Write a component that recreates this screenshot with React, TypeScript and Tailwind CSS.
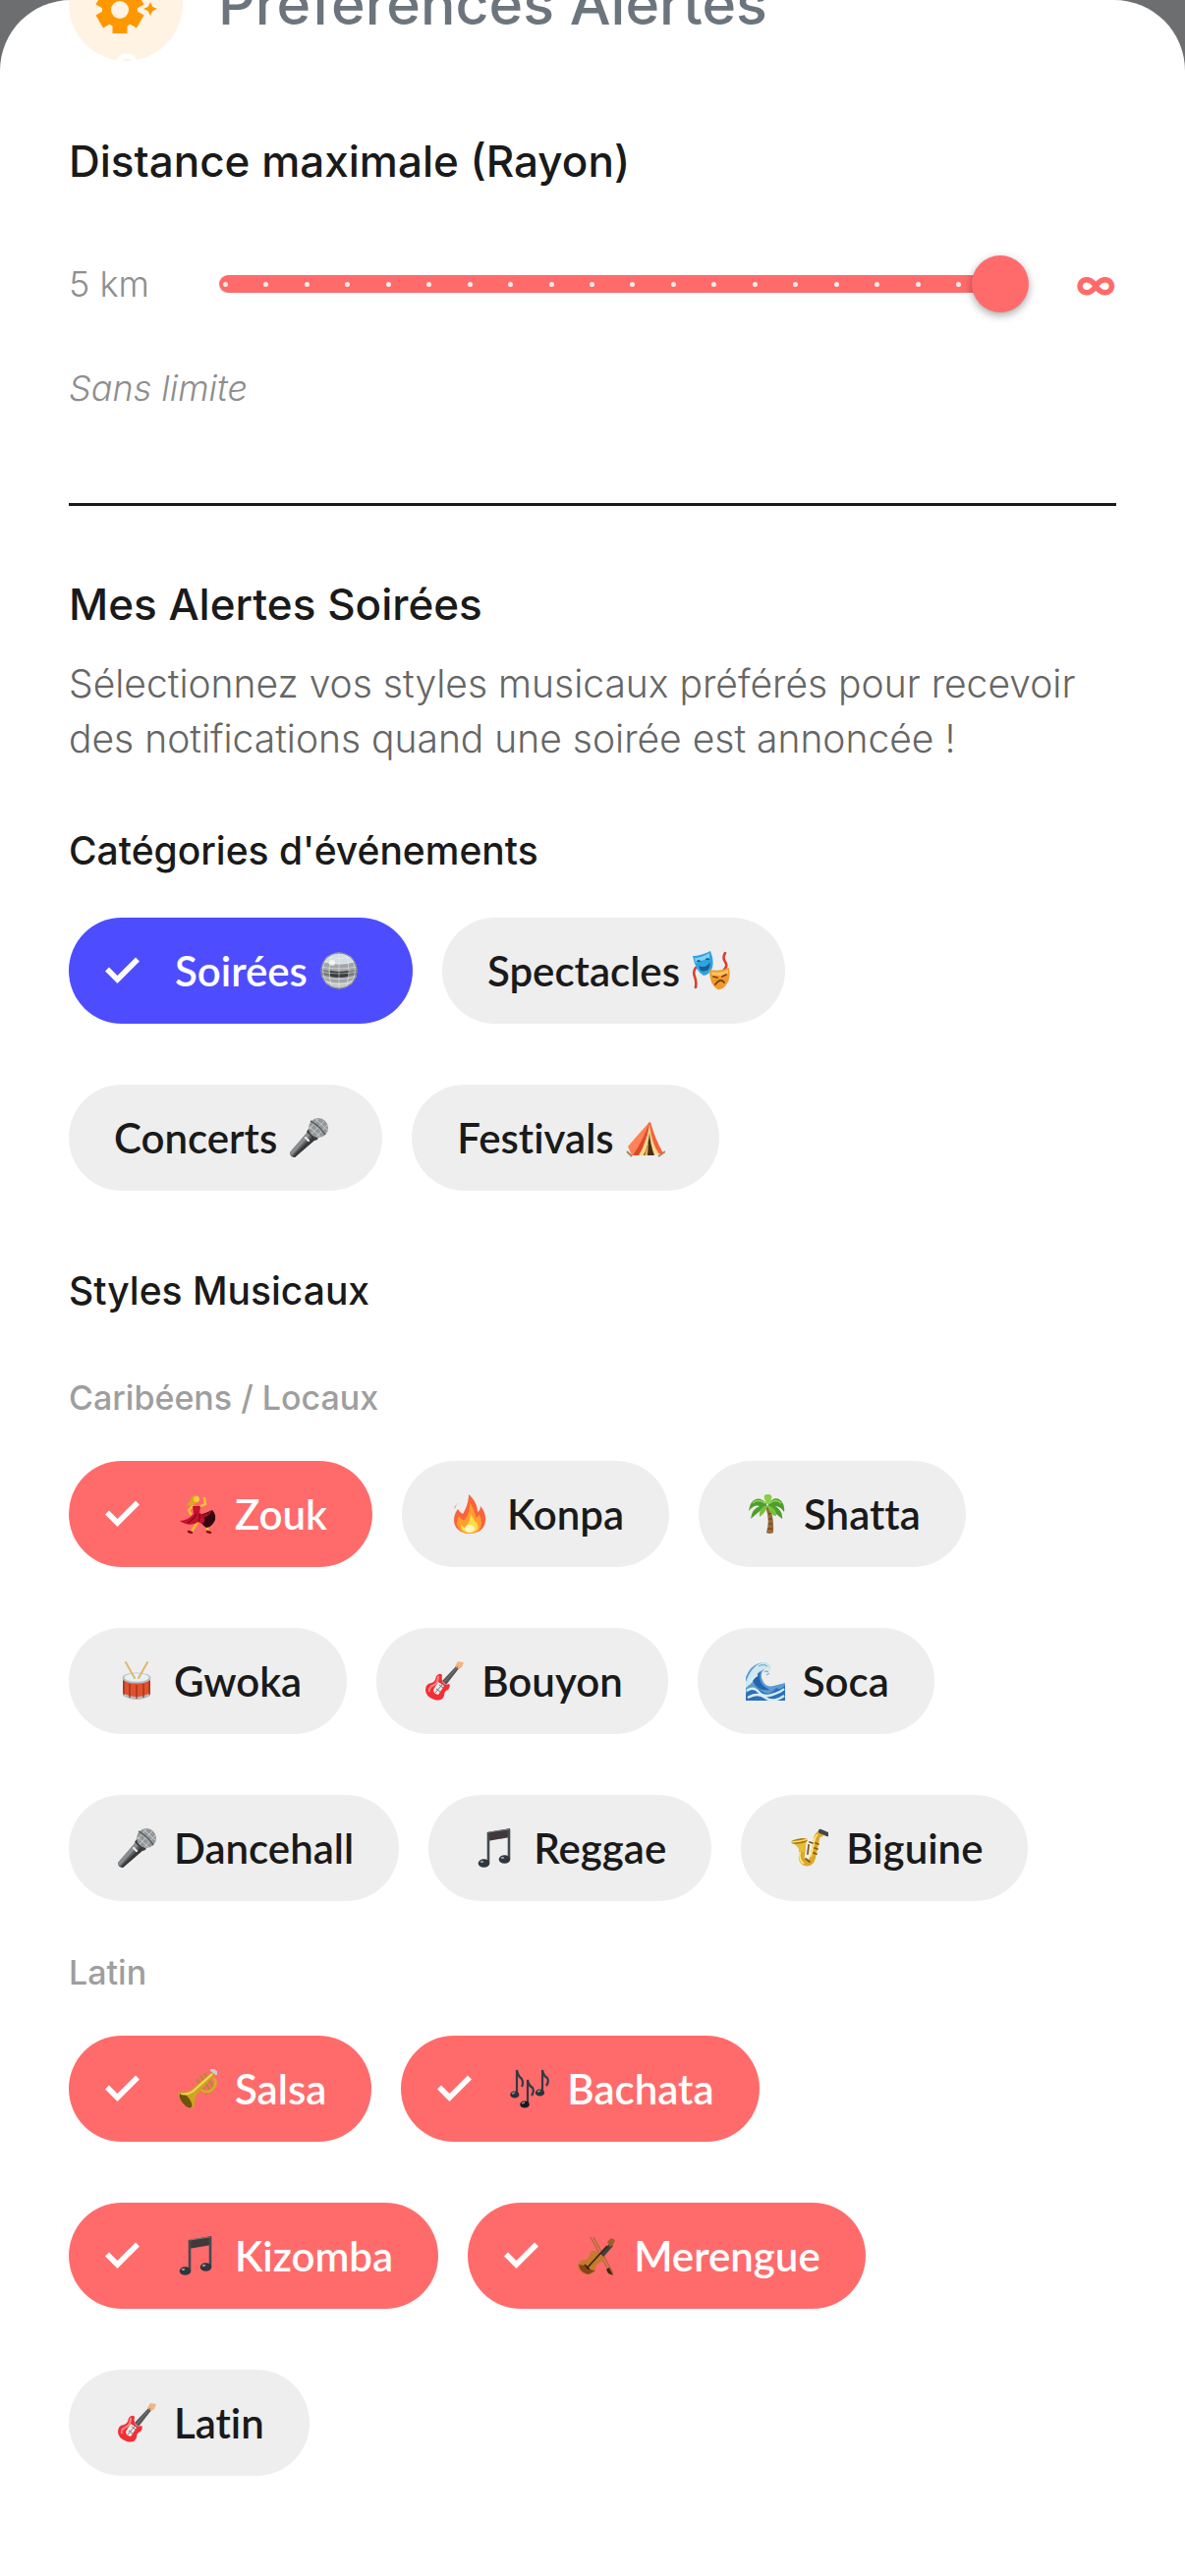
import { useState, type ReactNode } from "react";

type EmojiName =
  | "disco"
  | "masks"
  | "mic"
  | "tent"
  | "dancer"
  | "fire"
  | "palm"
  | "drum"
  | "guitar"
  | "wave"
  | "note"
  | "notes"
  | "sax"
  | "trumpet"
  | "violin";

type Chip = { label: string; emoji: EmojiName };

const CATEGORIES: Chip[] = [
  { label: "Soirées", emoji: "disco" },
  { label: "Spectacles", emoji: "masks" },
  { label: "Concerts", emoji: "mic" },
  { label: "Festivals", emoji: "tent" },
];

const STYLE_GROUPS: { title: string; styles: Chip[] }[] = [
  {
    title: "Caribéens / Locaux",
    styles: [
      { label: "Zouk", emoji: "dancer" },
      { label: "Konpa", emoji: "fire" },
      { label: "Shatta", emoji: "palm" },
      { label: "Gwoka", emoji: "drum" },
      { label: "Bouyon", emoji: "guitar" },
      { label: "Soca", emoji: "wave" },
      { label: "Dancehall", emoji: "mic" },
      { label: "Reggae", emoji: "note" },
      { label: "Biguine", emoji: "sax" },
    ],
  },
  {
    title: "Latin",
    styles: [
      { label: "Salsa", emoji: "trumpet" },
      { label: "Bachata", emoji: "notes" },
      { label: "Kizomba", emoji: "note" },
      { label: "Merengue", emoji: "violin" },
      { label: "Latin", emoji: "guitar" },
    ],
  },
];

const STEPS = 19;

const EMOJIS: Record<EmojiName, ReactNode> = {
  disco: (
    <>
      <circle cx="20" cy="20" r="18.5" fill="#a3a6a8" />
      <path d="M4 11a18.500 18.500 0 0 1 32 0Q20 16 4 11Z" fill="#d3dde4" />
      <path d="M2 19Q20 23 38 19V24Q20 29 2 24Z" fill="#77797b" />
      <path d="M11 20Q20 22 30 20V26Q20 28 11 26Z" fill="#3a3c3e" />
      <path d="M4 29Q20 36 36 29A18.500 18.500 0 0 1 4 29Z" fill="#c9c8c5" />
      <path
        d="M20 2v36M13 3Q7 20 13 37M27 3Q33 20 27 37M8 6Q-1 20 8 34M32 6Q41 20 32 34M8 6Q20 9 32 6M4 11Q20 15 36 11M2 16Q20 20 38 16M2 21Q20 25 38 21M2 26Q20 31 38 26M6 31Q20 36 34 31"
        fill="none"
        stroke="#eef1f3"
        strokeWidth="0.7"
        opacity="0.7"
      />
      <circle cx="13" cy="12" r="3" fill="#fff" opacity="0.7" />
      <circle cx="20" cy="20" r="18" fill="none" stroke="#808487" />
    </>
  ),
  masks: (
    <>
      <path d="M4 17Q1 21 3 26T4 37M34 2Q31 7 34 11T33 19" fill="none" stroke="#d8402f" strokeWidth="2.6" strokeLinecap="round" />
      <path d="M1 5Q9 5 19 0Q23 10 21 17Q18 24 12 25Q4 21 1 5Z" fill="#2fa2e2" />
      <path d="M3 7Q10 7 18 2L18 8Q10 9 4 12Z" fill="#7fd0f6" />
      <path d="M5 11Q7 8 9 11M14 9Q16 6 18 9M8 16Q14 18 18 13Q18 20 12 20Q9 20 8 16Z" fill="#155f94" stroke="#155f94" strokeWidth="1.2" />
      <path d="M18 19Q29 21 38 17Q40 27 36 33Q32 40 26 39Q18 34 18 19Z" fill="#f09a2e" />
      <path d="M20 21Q29 23 37 19V23Q29 26 21 25Z" fill="#ffc263" />
      <path d="M22 26l4 1M31 26l4-2M24 34Q29 27 33 32" fill="none" stroke="#7c3d0b" strokeWidth="1.8" strokeLinecap="round" />
    </>
  ),
  mic: (
    <>
      <path d="M20 13L28 21L6 40Q1 40 1 35Z" fill="#5d5f61" />
      <path d="M20 13L23 16L3 38Q1 37 1 35Z" fill="#8b8e90" />
      <path d="M25 18L28 21L6 40L4 39Z" fill="#38393b" />
      <path d="M20 11L30 21L27 23L18 14Z" fill="#3b3d3f" />
      <circle cx="30" cy="10" r="10" fill="#94989b" />
      <path d="M23 4l14 13M27 1l12 11M21 9l11 10M23 16L36 3M28 19L39 7M21 11l9-10" stroke="#c9cccd" strokeWidth="1" />
      <path d="M22 3Q31 8 37 17" fill="none" stroke="#5d6062" strokeWidth="1.6" />
      <path d="M17 20l3 3" stroke="#e4e6e7" strokeWidth="2.4" strokeLinecap="round" />
    </>
  ),
  tent: (
    <>
      <path d="M1 34L6 39M33 39l7-5" stroke="#a9865b" strokeWidth="2" />
      <path d="M23 5L25 4Q29 20 38 36L17 38Z" fill="#f4623a" />
      <path d="M24 4Q13 16 2 29L6 38L16 37Z" fill="#ff8257" />
      <path d="M24 4Q21 22 14 38L7 38Q18 22 24 4Z" fill="#d94b28" />
      <path d="M24 6Q26 26 34 37L13 38Q22 24 24 6Z" fill="#f6d88e" />
      <path d="M24 15Q25 28 29 38H18Q23 28 24 15Z" fill="#4b2d19" />
      <path d="M23 24L19 38H22Z" fill="#e3b55a" />
    </>
  ),
  dancer: (
    <>
      <path d="M23 27L29 31L31 38M21 27L17 33L14 38" fill="none" stroke="#f2b92b" strokeWidth="2.6" strokeLinecap="round" strokeLinejoin="round" />
      <path d="M15 12L11 16L13 20M23 12L28 10L27 4" fill="none" stroke="#f7c531" strokeWidth="2.4" strokeLinecap="round" strokeLinejoin="round" />
      <path d="M22 21Q29 19 35 16Q39 20 38 26Q35 33 29 34Q24 31 22 25Z" fill="#33060e" />
      <path d="M15 12L23 12L22 19Q28 21 27 28Q24 31 21 28Q12 34 2 27Q10 27 16 20Z" fill="#c3122c" />
      <path d="M23 21Q30 20 35 16Q31 24 24 24Z" fill="#a80f25" />
      <path d="M19 20Q16 26 10 29M22 20Q23 24 21 28" stroke="#80081b" strokeWidth="1.2" fill="none" />
      <path d="M14 3Q17 -1 21 2Q22 8 17 10Q12 13 9 10Q13 8 14 3Z" fill="#d8a91c" />
      <circle cx="19" cy="5" r="3" fill="#f9cb3c" />
      <path d="M11 38l3 1M30 38l3 1" stroke="#8a0b1d" strokeWidth="2.4" strokeLinecap="round" />
    </>
  ),
  fire: (
    <>
      <path d="M19 0Q28 8 28 18Q31 16 31 12Q37 19 36 27Q35 39 20 40Q5 39 4 27Q4 20 8 15Q10 19 13 20Q19 10 19 0Z" fill="#f9643c" />
      <path d="M20 8Q26 18 26 24L30 21Q34 30 30 36Q26 40 20 40Q10 40 7 31Q7 26 9 22Q12 27 15 26Q21 18 20 8Z" fill="#ff9d2f" />
      <path d="M21 19Q24 27 28 30Q31 38 20 39Q10 38 11 31L15 34Q21 28 21 19Z" fill="#ffdc45" />
      <ellipse cx="20" cy="35" rx="5" ry="4" fill="#fff7bd" />
      <path d="M7 10Q6 13 4 15Q5 11 9 9Z" fill="#f9643c" />
    </>
  ),
  palm: (
    <>
      <path d="M19 13Q24 25 20 39Q23 41 27 39Q28 24 23 12Z" fill="#9a6a3c" />
      <path d="M22 20l4-1M22 25h4M22 30h4M21 35h5" stroke="#64401f" strokeWidth="1.2" />
      <path d="M20 9Q12 1 6 7Q3 10 2 17Q8 10 13 12Q5 15 4 25Q13 17 20 12Z" fill="#4f9e2b" />
      <path d="M22 9Q30 0 36 8Q39 12 38 18Q34 12 29 12Q37 17 36 25Q28 19 22 12Z" fill="#4f9e2b" />
      <path d="M21 11Q12 13 13 23Q19 19 21 12Q24 22 30 22Q31 14 21 11Z" fill="#78c23d" />
      <path d="M21 10Q15 1 20 0Q29 -1 23 10Z" fill="#87cf4b" />
      <path d="M19 9Q11 4 6 9M23 9Q30 4 35 9" fill="none" stroke="#93d658" strokeWidth="1.6" />
    </>
  ),
  drum: (
    <>
      <path d="M6 18V33Q20 43 34 33V18Z" fill="#e2512e" />
      <path d="M6 32V35Q20 43 34 35V32Q20 40 6 32Z" fill="#b9babb" />
      <ellipse cx="20" cy="17" rx="14.5" ry="5.5" fill="#b7bfc4" />
      <ellipse cx="20" cy="16.5" rx="12.5" ry="4.2" fill="#e4f2f6" />
      <path d="M7 20V34M13 23V37M20 24V38M27 23V37M33 20V34" stroke="#913019" strokeWidth="1.2" />
      <path d="M9 1L18 17M31 1L22 17" stroke="#e0b66e" strokeWidth="2" strokeLinecap="round" />
    </>
  ),
  guitar: (
    <>
      <path d="M18 20L33 4L36 6L22 24Z" fill="#57575a" />
      <path d="M31 5L34 0L40 1L38 6L35 8Z" fill="#f2b483" />
      <path d="M12 15Q16 11 18 14Q17 19 19 22Q21 25 25 23Q27 25 24 29Q20 30 20 35Q18 41 10 39Q1 36 1 29Q1 23 7 22Q11 21 12 15Z" fill="#f22f35" />
      <path d="M14 15Q14 23 8 25Q4 27 5 31" fill="none" stroke="#ff8480" strokeWidth="2" />
      <path d="M14 21L20 25L14 34Q9 33 9 29Z" fill="#e9e9ec" />
      <path d="M12 28l4 3M15 24l4 3M11 32L34 5" stroke="#77787c" strokeWidth="1" />
    </>
  ),
  wave: (
    <>
      <path d="M0 40V16Q5 3 17 1Q25 1 25 8Q22 5 19 8Q14 12 17 19Q20 27 28 25L40 22V40Z" fill="#5b9bd2" />
      <path d="M0 21Q6 4 17 1Q26 0 25 10Q21 6 17 9Q10 12 8 20L0 27Z" fill="#cfe7ee" />
      <path d="M15 10Q12 19 18 25L24 29Q12 31 7 20Z" fill="#2465b1" />
      <path d="M0 33Q8 22 17 31Q24 36 31 27Q36 30 40 24V40H0Z" fill="#2c6fb8" />
      <path d="M1 30Q8 25 13 31T27 34T39 28M2 37Q12 31 20 37T39 35M3 23Q7 16 12 14" fill="none" stroke="#d5edf3" strokeWidth="2.4" />
      <path d="M19 11q2-2 4 0M21 14l3-2M13 5q5-3 9 0" fill="none" stroke="#7bb5cf" strokeWidth="1.3" />
    </>
  ),
  note: (
    <>
      <path d="M11 4L34 0V9L11 13Z" fill="#41383b" />
      <path d="M12 4V35M33 1V31" stroke="#444a52" strokeWidth="2.6" />
      <path d="M12 4L33 1" stroke="#7c777a" strokeWidth="1" />
      <ellipse cx="7.5" cy="35.5" rx="5.8" ry="4.3" fill="#30363d" />
      <ellipse cx="28.5" cy="31.5" rx="5.8" ry="4.3" fill="#30363d" />
      <ellipse cx="5.5" cy="34" rx="1.8" ry="1.1" fill="#9aa3ac" />
      <ellipse cx="26.5" cy="30" rx="1.8" ry="1.1" fill="#9aa3ac" />
    </>
  ),
  notes: (
    <>
      <path d="M7 25V1Q8 7 12 10Q14 14 12 18M33 23V1Q34 7 38 9Q40 13 37 17M18 35V11Q19 17 23 19Q25 23 22 27" fill="none" stroke="#333a42" strokeWidth="2.2" />
      <ellipse cx="4.8" cy="26" rx="4.6" ry="3.6" fill="#2b3138" />
      <ellipse cx="30.5" cy="24" rx="4.6" ry="3.6" fill="#2b3138" />
      <ellipse cx="15" cy="36" rx="4.8" ry="3.6" fill="#15191d" />
      <path d="M2 25l3-1M28 23l3-1M12 35l3-1" stroke="#8a939c" strokeWidth="1.4" />
    </>
  ),
  sax: (
    <>
      <path d="M35 6Q29 4 28 11L24 30Q22 37 16 35Q12 33 13 26L14 17" fill="none" stroke="#dba926" strokeWidth="6" />
      <path d="M2 14Q9 17 11 24H17Q16 17 19 11Z" fill="#e8bc34" />
      <ellipse cx="10.500" cy="13" rx="8.500" ry="2.600" fill="#a8780f" transform="rotate(-9 10.5 13)" />
      <path d="M2 14Q10 14 19 11" fill="none" stroke="#f9dd61" strokeWidth="1.6" />
      <path d="M11 24Q10 33 15 36M29 6Q26 9 25 16L22 29" fill="none" stroke="#ffe98a" strokeWidth="1.6" />
      <path d="M32 3L39 6" stroke="#44464a" strokeWidth="4.400" strokeLinecap="round" />
      <path d="M27 15l3 1M26 20l3 1M25 25l3 1M17 31l4 3M20 17l-1 9M21 14l3 1" stroke="#80580f" strokeWidth="1.8" strokeLinecap="round" />
    </>
  ),
  trumpet: (
    <>
      <path d="M23 7L34 23M19 10L30 26M27 4l9 14" stroke="#b7883a" strokeWidth="2.6" />
      <path d="M22 19Q29 27 36 20Q41 13 36 9" fill="none" stroke="#d7ac27" strokeWidth="2.6" />
      <path d="M36 2L39 4L20 25Q16 31 17 38L13 40Q4 37 0 26L2 23Q9 25 15 20Z" fill="#cfa41f" />
      <ellipse cx="8" cy="32" rx="4" ry="9" transform="rotate(-38 8 32)" fill="#6f5308" />
      <path d="M35 5L15 23Q8 27 3 25" fill="none" stroke="#f6da5c" strokeWidth="1.8" />
      <path d="M35 1L39 4" stroke="#c9ced1" strokeWidth="4" strokeLinecap="round" />
    </>
  ),
  violin: (
    <>
      <path d="M14 1L34 38M17 1L37 38" stroke="#a86f34" strokeWidth="1.4" />
      <path d="M30 34l3-2 4 8-5-2Z" fill="#49250f" />
      <path d="M19 23L33 8L37 10L23 26Z" fill="#42403f" />
      <path d="M31 6L35 2L39 4L37 9L34 11Z" fill="#9f5f28" />
      <path d="M14 16Q19 13 22 17Q26 19 28 22Q26 27 21 28Q19 30 19 34Q17 40 10 39Q1 37 1 29Q3 24 9 24Q13 22 14 16Z" fill="#c7792f" />
      <path d="M2 29Q3 37 12 39L19 35Q13 35 8 30Z" fill="#874516" />
      <path d="M10 33L31 10M8 29l5 5" stroke="#3a2213" strokeWidth="1.6" />
    </>
  ),
};

function Emoji({ name }: { name: EmojiName }) {
  return (
    <svg viewBox="0 0 40 40" aria-hidden="true" className="mr-[9px] ml-[3px] h-10 w-10 shrink-0">
      {EMOJIS[name]}
    </svg>
  );
}

function CheckIcon() {
  return (
    <svg viewBox="0 0 48 48" aria-hidden="true" className="mr-[30px] h-12 w-12 shrink-0">
      <path d="M9 22.500L19.500 33L40 12.500" fill="none" stroke="currentColor" strokeWidth="5.600" />
    </svg>
  );
}

function HeaderIcon() {
  return (
    <svg viewBox="0 0 116 116" aria-hidden="true" className="h-[116px] w-[116px] shrink-0">
      <circle cx="58" cy="58" r="58" fill="#fff3e4" />
      <circle cx="59" cy="120" r="9" fill="#fff3e4" stroke="#fff" strokeWidth="5" />
      <g fill="#ff9800">
        <circle cx="52" cy="64" r="18" />
        <rect x="44.500" y="40" width="15" height="48" />
        <rect x="44.500" y="40" width="15" height="48" transform="rotate(60 52 64)" />
        <rect x="44.500" y="40" width="15" height="48" transform="rotate(120 52 64)" />
        <path d="M83 56l2.200 4.800 4.800 2.200-4.800 2.200-2.200 4.800-2.200-4.800-4.800-2.200 4.800-2.200Z" />
      </g>
      <circle cx="52" cy="64" r="9" fill="#fff3e4" />
    </svg>
  );
}

function ChipButton({
  chip,
  selected,
  activeClass,
  emojiFirst,
  onClick,
}: {
  chip: Chip;
  selected: boolean;
  activeClass: string;
  emojiFirst?: boolean;
  onClick: () => void;
}) {
  return (
    <button
      type="button"
      aria-pressed={selected}
      onClick={onClick}
      className={`flex h-[108px] items-center rounded-full pr-[46px] font-[Lato,sans-serif] text-[42px] font-semibold [font-variant-ligatures:none] transition-colors ${
        selected ? `pl-[30px] text-white ${activeClass}` : "bg-[#eeeeee] pl-[46px] text-[#1a1a1a]"
      }`}
    >
      {selected && <CheckIcon />}
      <span className={`flex items-center gap-[9px] ${emojiFirst ? "flex-row-reverse" : ""}`}>
        {chip.label}
        <Emoji name={chip.emoji} />
      </span>
    </button>
  );
}

export default function App() {
  const [radius, setRadius] = useState(STEPS);
  const [categories, setCategories] = useState<Set<string>>(new Set(["Soirées"]));
  const [styles, setStyles] = useState<Set<string>>(
    new Set(["Zouk", "Salsa", "Bachata", "Kizomba", "Merengue"])
  );

  function toggle(set: Set<string>, label: string) {
    const next = new Set(set);
    if (next.has(label)) next.delete(label);
    else next.add(label);
    return next;
  }

  return (
    <div className="min-h-screen bg-[#6d6e70] font-[Inter,sans-serif] text-[#1a1a1a]">
      <main className="flex min-h-screen flex-col overflow-hidden rounded-t-[72px] bg-white px-[70px] pb-[100px]">
        {/* Header, scrolled partly out of the sheet */}
        <header className="-mt-[54px] flex items-center gap-[36px]">
          <HeaderIcon />
          <h1 className="text-[59px] leading-[72px] font-medium text-[#6c757d]">
            Préférences Alertes
          </h1>
        </header>

        <section className="mt-[72px]">
          <label htmlFor="radius" className="block text-[44px] leading-[60px] font-medium">
            Distance maximale (Rayon)
          </label>
          <div className="mt-[66px] flex items-center gap-12">
            <span className="text-[36px] font-light text-[#8e8e8e]">5 km</span>
            <div className="relative flex h-[58px] flex-1 items-center px-[23px]">
              <div className="flex h-[18px] flex-1 items-center justify-between rounded-full bg-[#ff6b6b] px-[4px]">
                {Array.from({ length: STEPS + 1 }, (_, i) => (
                  <span key={i} className="h-[5px] w-[5px] rounded-full bg-[#eeeeee]" />
                ))}
              </div>
              <input
                id="radius"
                type="range"
                min={0}
                max={STEPS}
                value={radius}
                onChange={(e) => setRadius(Number(e.target.value))}
                className="absolute inset-0 h-full w-full cursor-pointer appearance-none bg-transparent [&::-webkit-slider-thumb]:h-[58px] [&::-webkit-slider-thumb]:w-[58px] [&::-webkit-slider-thumb]:appearance-none [&::-webkit-slider-thumb]:rounded-full [&::-webkit-slider-thumb]:bg-[#ff6b6b] [&::-webkit-slider-thumb]:shadow-[0_3px_8px_rgba(0,0,0,0.35)]"
              />
            </div>
            <span className="text-[42px] leading-[48px] font-bold text-[#ff6b6b]">∞</span>
          </div>
          <p className="mt-[51px] text-[36px] leading-[52px] font-light text-[#8e8e8e] italic">
            {radius === STEPS ? "Sans limite" : `${(radius + 1) * 5} km`}
          </p>
        </section>

        <hr className="mt-[91px] border-t-[3px] border-[#1a1a1a]" />

        <section className="mt-[70px]">
          <h2 className="text-[44px] leading-[60px] font-medium">Mes Alertes Soirées</h2>
          <p className="mt-[23px] text-[39px] leading-[56px] font-light text-[#666666]">
            Sélectionnez vos styles musicaux préférés pour recevoir des notifications quand une
            soirée est annoncée !
          </p>

          <h3 className="mt-[58px] text-[39px] leading-[56px] font-medium">
            Catégories d'événements
          </h3>
          <div className="mt-10 flex flex-wrap gap-x-[30px] gap-y-[62px]">
            {CATEGORIES.map((chip) => (
              <ChipButton
                key={chip.label}
                chip={chip}
                selected={categories.has(chip.label)}
                activeClass="bg-[#4d4dff]"
                onClick={() => setCategories((prev) => toggle(prev, chip.label))}
              />
            ))}
          </div>
        </section>

        <section className="mt-[74px]">
          <h3 className="text-[39px] leading-[56px] font-medium">Styles Musicaux</h3>
          <div className="mt-[57px] flex flex-col gap-[49px]">
            {STYLE_GROUPS.map((group) => (
              <div key={group.title}>
                <h4 className="text-[34px] leading-[48px] font-medium text-[#9e9e9e]">
                  {group.title}
                </h4>
                <div className="mt-10 flex flex-wrap gap-x-[30px] gap-y-[62px]">
                  {group.styles.map((chip) => (
                    <ChipButton
                      key={chip.label}
                      chip={chip}
                      emojiFirst
                      selected={styles.has(chip.label)}
                      activeClass="bg-[#ff6b6b]"
                      onClick={() => setStyles((prev) => toggle(prev, chip.label))}
                    />
                  ))}
                </div>
              </div>
            ))}
          </div>
        </section>
      </main>
    </div>
  );
}
